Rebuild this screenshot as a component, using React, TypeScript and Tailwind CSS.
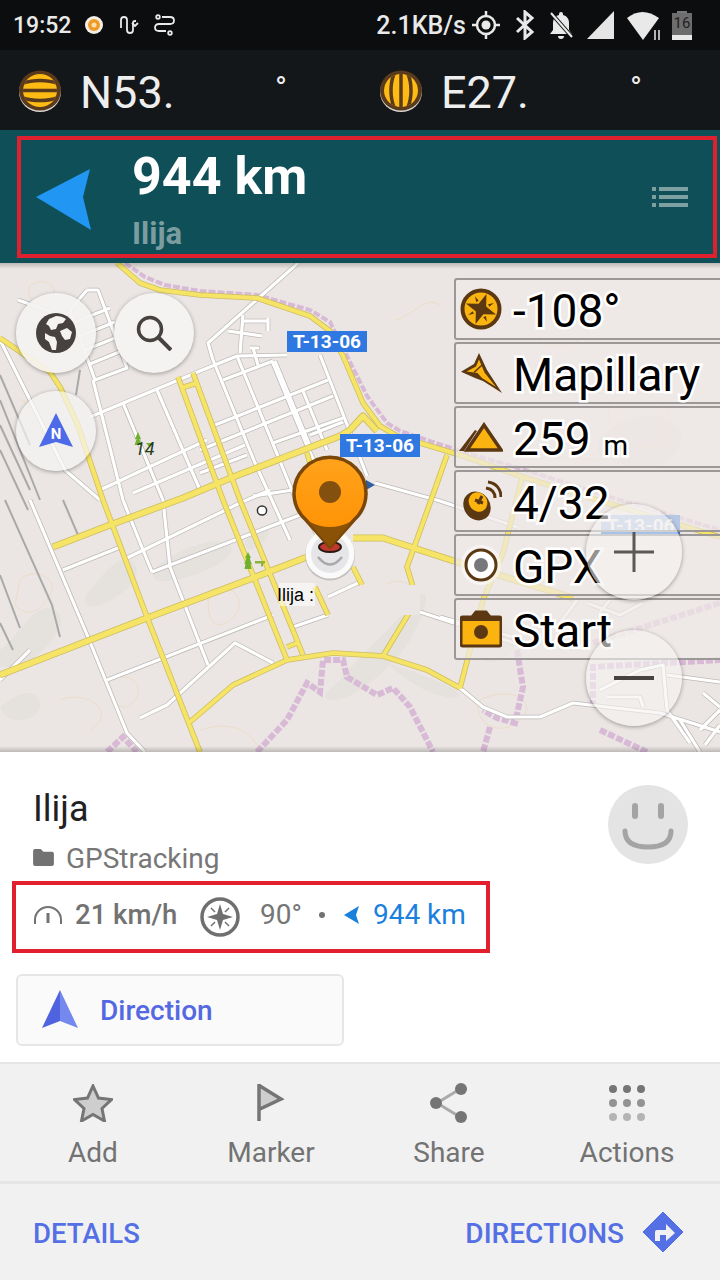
import React from "react";

type P = number[];
const pts = (a: P) => a.join(" ");

const yellowRoads: P[] = [
  [117,263,140,283,160,290,200,295,257,298,310,316,330,331,343,356,363,403,380,426,397,436,460,455,523,477,607,503,720,537],
  [0,338,50,372,60,387,77,423,103,500,147,617,200,752],
  [0,675,90,640,147,618,253,578,307,557],
  [353,538,383,538,460,563,573,598],
  [53,547,110,525,183,498,233,477,340,436,350,430,363,416,377,431],
  [178,377,223,500,287,660],
  [193,373,240,500,303,655],
  [181,388,197,383],
  [287,647,297,643],
  [190,722,233,685,287,660,333,653,383,656,427,670,460,688],
  [383,656,417,600,407,567,430,503,447,455],
  [522,478,503,553,483,600,460,688],
  [353,567,362,585],
  [315,587,328,615],
  [307,453,310,463],
];

const whiteRoads: P[] = [
  [298,263,208,343,213,360,255,463,290,540],
  [237,356,293,493,320,540],
  [272,361,307,446,333,500],
  [275,361,310,446],
  [320,355,367,476],
  [303,391,327,450],
  [93,380,123,500,143,550,152,572],
  [123,403,163,500,170,567,208,665],
  [157,390,200,490],
  [90,417,200,371,237,356,287,355],
  [223,380,273,361],
  [215,425,328,380],
  [200,450,333,396],
  [273,443,343,418],
  [310,435,343,422],
  [200,473,247,455],
  [253,496,293,490],
  [100,490,207,440],
  [133,493,245,445],
  [63,570,118,548],
  [127,558,240,503,270,490],
  [152,572,300,515],
  [107,680,273,615],
  [293,627,328,615],
  [328,597,358,583],
  [140,718,167,705,235,643,273,663],
  [30,500,88,637,127,733,145,752],
  [420,612,460,625,520,645],
  [375,483,440,501,517,527],
  [440,617,513,637],
  [0,340,40,420,65,470,100,500],
  [18,300,60,315],
  [87,290,98,290,127,368,95,380,70,310,87,290],
  [75,322,110,308],
  [80,336,115,322],
  [85,350,120,336],
  [90,364,124,350],
  [243,321,267,321],
  [268,318,268,331],
  [228,331,262,336],
  [243,315,240,353],
  [250,348,258,348,253,348,258,365],
  [460,688,483,707,507,717,540,717,573,703,607,707,660,713,720,732],
  [667,675,720,682],
  [600,690,640,670,663,665,667,710],
  [607,697,640,697,643,707],
  [667,710,690,743],
  [680,720,700,752],
  [703,693,720,707],
  [700,730,720,710],
  [705,745,720,725],
  [577,600,557,627],
  [587,603,620,615,643,603],
  [600,612,610,600],
  [0,680,30,650],
];

const purple: [P, number][] = [
  [[125,263,145,277,165,285,200,291,257,295,310,310,330,322,347,356,367,396,387,423,400,431,460,451,525,470,610,497,720,530], 4],
  [[107,752,123,737,137,752], 6],
  [[257,752,287,720,307,683,320,692,323,660,343,660,347,677,377,695,393,688,410,707,433,752], 6],
  [[517,650,523,687,515,723,497,718,483,710], 6],
  [[490,727,483,752], 6],
  [[593,643,720,603], 6],
  [[593,707,593,667,720,660], 6],
  [[600,730,647,752], 6],
];

const grayRail: P[] = [
  [5,500,52,605,60,637],
  [0,575,20,628],
  [0,623,13,650],
  [63,500,78,535],
  [0,400,40,500],
  [0,375,30,445],
  [0,425,30,490],
  [0,450,28,510],
  [80,370,76,395],
];

const contours: string[] = [
  "M30 285c20-10 30 5 20 15s-25 0-20-15z",
  "M20 580c15-15 40 0 30 15s-20 25-35 10z",
  "M110 680c20-10 35 5 25 20s-30 5-25-20z",
  "M210 590c25-10 40 15 20 30s-25-10-20-30z",
  "M480 700c30-15 60 0 40 20s-50 0-40-20z",
  "M540 300c30-10 70 20 40 40s-70-10-40-40z",
  "M610 400c20-20 70 0 60 30s-70 20-60-30z",
  "M385 585c15-10 35 0 25 20s-35 5-25-20z",
  "M60 700c25-10 60 10 30 30",
  "M500 460c30-20 80 10 120-5",
  "M200 730c30-10 50 0 60 20",
  "M20 400c15 5 20 25 5 30",
  "M395 320c20-5 30-25 45-15",
];

const shades: string[] = [
  "M165 560c25-15 55-25 65-15s-25 30-55 35-25-10-10-20z",
  "M340 680c20-25 50-50 75-80 20-20 10 15-5 40s-55 60-75 60-5-10 5-20z",
  "M395 665c10 5 45 15 60 25s-10 10-30 0-45-30-30-25z",
  "M0 650c25-20 35-50 55-40s-15 50-35 55-30 0-20-15z",
  "M10 700c15-10 30-10 30 5s-25 20-35 10 0-10 5-15z",
  "M610 430c30-25 80-15 70 15s-50 25-70 15-15-15 0-30z",
  "M470 620c40-10 60 30 30 40s-50-30-30-40z",
  "M245 540c20-20 30-10 20 0s-20 15-20 0z",
  "M90 590c20-25 35-40 45-25s-20 35-35 40-20-5-10-15z",
];

const HaloBase = "[font-family:Roboto,sans-serif] leading-none text-black [-webkit-text-stroke:5px_#ffffff] [paint-order:stroke_fill]";
const Halo = `${HaloBase} text-[46px]`;

function MapBackground() {
  return (
    <svg viewBox="0 263 720 489" className="absolute inset-0 h-full w-full">
      <rect x="0" y="263" width="720" height="489" fill="#ebe6e3" />
      {shades.map((d, i) => <path key={i} d={d} fill="#dcdbd8" opacity="0.4" />)}
      {contours.map((d, i) => <path key={i} d={d} fill="none" stroke="#eedcc8" strokeWidth="1" />)}
      {grayRail.map((p, i) => <polyline key={i} points={pts(p)} fill="none" stroke="#a9a9a9" strokeWidth="2" />)}
      {purple.map(([p, w], i) => (
        <polyline key={i} points={pts(p)} fill="none" stroke="#d8b9d6" strokeWidth={w} strokeDasharray="7 2" />
      ))}
      {whiteRoads.map((p, i) => <polyline key={i} points={pts(p)} fill="none" stroke="#bdb9b6" strokeWidth="4.6" strokeLinejoin="round" />)}
      {whiteRoads.map((p, i) => <polyline key={i} points={pts(p)} fill="none" stroke="#ffffff" strokeWidth="3.2" strokeLinejoin="round" />)}
      {yellowRoads.map((p, i) => <polyline key={i} points={pts(p)} fill="none" stroke="#cdbd62" strokeWidth={i === 2 || i === 3 || i === 4 ? 7 : 5.6} strokeLinejoin="round" />)}
      {yellowRoads.map((p, i) => <polyline key={i} points={pts(p)} fill="none" stroke="#f6e467" strokeWidth={i === 2 || i === 3 || i === 4 ? 5.4 : 4} strokeLinejoin="round" />)}
      <path d="M138 432l3 7h-1.6l2 6h-6.8l2-6H135z" fill="#6fb02c" />
      <path d="M146 443l7 0-3.5 4z" fill="#6fb02c" />
      <path d="M248 552l3 6h-1.4l2 6h-1.1l1 5h-7l1-5h-1.1l2-6h-1.4z" fill="#6fb02c" />
      <path d="M255 561h10v2.4h-2v3h-2v-3h-6z" fill="#8db33a" />
      <circle cx="262" cy="510.500" r="4.600" fill="#fff" stroke="#333" strokeWidth="1.500" />
      <path d="M366 480l9 5-9 5z" fill="#2e5f9e" />
      <rect x="279" y="583" width="36" height="23" fill="#ffffff" opacity="0.55" />
      <rect x="360" y="585" width="60" height="30" fill="#ebe6e3" />
    </svg>
  );
}

function RoundButton({ className, children }: { className: string; children: React.ReactNode }) {
  return (
    <div className={`absolute flex items-center justify-center rounded-full shadow-[0_1px_4px_rgba(0,0,0,0.35)] ${className}`}>
      {children}
    </div>
  );
}

function RoadLabel({ className, children }: { className: string; children: string }) {
  return (
    <div className={`absolute flex items-center justify-center bg-[#2f78e2] [font-family:Roboto,sans-serif] text-[19px] font-bold leading-none text-white ${className}`}>
      {children}
    </div>
  );
}

function Widget({ icon, children }: { icon: React.ReactNode; children: React.ReactNode }) {
  return (
    <div className="flex h-[62px] items-center rounded-l-[3px] border-2 border-r-0 border-[#9b9897] bg-[#efeae7]/70">
      <div className="flex w-[50px] shrink-0 items-center justify-center">{icon}</div>
      <div className="ml-[8px] mt-[4px] flex items-baseline">{children}</div>
    </div>
  );
}

const BR = "#5b3812";
const YL = "#fbb40f";

function CompassWidgetIcon() {
  return (
    <svg viewBox="0 0 42 42" className="h-[42px] w-[42px]">
      <circle cx="21" cy="21" r="18.500" fill={YL} stroke={BR} strokeWidth="4" />
      <g transform="rotate(20 21 21)">
        <path d="M21 5l4 12 12 4-12 4-4 12-4-12-12-4 12-4z" fill={BR} />
        <path d="M11 11l5 3-2 2zM31 11l-5 3 2 2zM11 31l5-3-2-2zM31 31l-5-3 2-2z" fill={BR} />
      </g>
    </svg>
  );
}

function MapillaryIcon() {
  return (
    <svg viewBox="0 0 42 40" className="h-[40px] w-[42px]">
      <path d="M19 0L27 17 42 40 23 28 15 25 1 18.700 14 11z" fill={BR} />
      <path d="M19 6.500L24.500 19.500 36 34 22 25 17.500 20 6.500 18.500 16 13.500z" fill={YL} />
      <path d="M14 19.500L22 12" stroke={BR} strokeWidth="1.500" />
    </svg>
  );
}

function AltitudeIcon() {
  return (
    <svg viewBox="0 0 44 30" className="h-[30px] w-[44px]">
      <path d="M8 28h34L25 3z" fill={YL} stroke={BR} strokeWidth="3.500" strokeLinejoin="miter" />
      <path d="M0 29L16 8l2 1L5 29z" fill={BR} />
    </svg>
  );
}

function SatelliteIcon() {
  return (
    <svg viewBox="0 0 42 42" className="h-[42px] w-[42px]">
      <ellipse cx="17" cy="26" rx="13" ry="15" transform="rotate(-35 17 26)" fill={BR} />
      <ellipse cx="18" cy="22" rx="9" ry="10" transform="rotate(-35 18 22)" fill={YL} />
      <path d="M18 24l4-8M15 20l8 3" stroke={BR} strokeWidth="3" />
      <path d="M26 8c6 1 9 5 9 10M28 2c8 1 13 7 13 15" fill="none" stroke={BR} strokeWidth="3" />
    </svg>
  );
}

function GpxIcon() {
  return (
    <svg viewBox="0 0 42 42" className="h-[42px] w-[42px]">
      <circle cx="21" cy="21" r="20" fill="#ffffff" opacity="0.5" />
      <circle cx="21" cy="21" r="15" fill="#fff" stroke={BR} strokeWidth="3" />
      <circle cx="21" cy="21" r="7" fill="#77787b" />
    </svg>
  );
}

function CameraIcon() {
  return (
    <svg viewBox="0 0 42 38" className="h-[38px] w-[42px]">
      <path d="M3 7h9l4-5h10l4 5h9q2 0 2 2v25q0 2-2 2H3q-2 0-2-2V9q0-2 2-2z" fill={YL} stroke={BR} strokeWidth="3" />
      <path d="M3 7h9l4-5h10l4 5h9q2 0 2 2v2H1V9q0-2 2-2z" fill={BR} />
      <circle cx="21" cy="22" r="7" fill={BR} />
    </svg>
  );
}

function Marker() {
  return (
    <div className="absolute left-[290px] top-[192px] h-[128px] w-[80px]">
      <svg viewBox="0 0 80 128" className="h-full w-full">
        <defs>
          <linearGradient id="pin" x1="0" y1="0" x2="0" y2="1">
            <stop offset="0" stopColor="#ffa31c" />
            <stop offset="1" stopColor="#ff8f00" />
          </linearGradient>
        </defs>
        <circle cx="40" cy="100.500" r="25" fill="#9c9c9c" opacity="0.5" />
        <circle cx="40" cy="99" r="24.500" fill="#fafafa" />
        <circle cx="40" cy="99" r="19" fill="#e6e6e8" />
        <ellipse cx="40" cy="92" rx="11" ry="5" fill="#c0382f" stroke="#2b1a14" strokeWidth="2" />
        <path d="M28 102q12 15 24 0" fill="none" stroke="#a9a9ab" strokeWidth="2.500" />
        <path d="M40 92 L16 65 A36 36 0 1 1 64 65 Z" fill="url(#pin)" />
        <path d="M16 65 A36 36 0 1 1 64 65 L40 92 Z" fill="none" stroke="#7a4708" strokeWidth="3.500" strokeLinejoin="round" />
        <path d="M40 92 L18 66 Q40 78 62 66 Z" fill="#8a5206" />
        <circle cx="40" cy="37" r="11" fill="#84500f" />
      </svg>
    </div>
  );
}

function StatusBar() {
  return (
    <div className="flex h-[50px] items-center bg-[#0c0d0e] pl-[13px] text-[#e9e9e9] [font-family:Roboto,sans-serif]">
      <span className="text-[23px] font-medium leading-none">19:52</span>
      <svg viewBox="0 0 20 20" className="ml-[13px] h-[20px] w-[20px]">
        <circle cx="10" cy="10" r="9" fill="#f4efe6" />
        <circle cx="10" cy="10" r="6" fill="#f09a25" />
        <circle cx="10" cy="10" r="2.500" fill="#f8e1b0" />
      </svg>
      <svg viewBox="0 0 20 22" className="ml-[15px] h-[22px] w-[20px]" fill="none" stroke="#e9e9e9" strokeWidth="1.800">
        <path d="M2 14V6q0-3 3-3t3 3v10q0 3 3 3t3-3V9q0-2 2-2h1" />
        <path d="M13 9l3 3 3-3" />
      </svg>
      <svg viewBox="0 0 22 22" className="ml-[15px] h-[22px] w-[22px]" fill="none" stroke="#e9e9e9" strokeWidth="1.800">
        <circle cx="4" cy="3" r="1.800" />
        <circle cx="16" cy="19" r="1.800" />
        <path d="M8 3h8q4 0 4 3.500T16 10H5q-4 0-4 3.500T5 17h7" />
      </svg>
      <span className="ml-[200px] whitespace-nowrap text-[25px] font-medium leading-none">2.1KB/s</span>
      <svg viewBox="0 0 28 28" className="ml-[6px] h-[28px] w-[28px] shrink-0" fill="none" stroke="#e9e9e9" strokeWidth="2.500">
        <circle cx="14" cy="14" r="9" />
        <circle cx="14" cy="14" r="4.500" fill="#e9e9e9" stroke="none" />
        <path d="M14 0v5M14 23v5M0 14h5M23 14h5" />
      </svg>
      <svg viewBox="0 0 20 30" className="ml-[15px] h-[30px] w-[20px] shrink-0" fill="none" stroke="#e9e9e9" strokeWidth="3">
        <path d="M2 8l15 14-7 6V2l7 6L2 22" />
      </svg>
      <svg viewBox="0 0 26 30" className="ml-[13px] h-[30px] w-[26px] shrink-0" fill="#e9e9e9">
        <path d="M13 2a2 2 0 0 1 2 2v1c4 1 6 4 6 8v7l3 4H2l3-4v-7c0-4 2-7 6-8V4a2 2 0 0 1 2-2zM10 26h6a3 3 0 0 1-6 0z" />
        <path d="M3 3l21 24" stroke="#0c0d0e" strokeWidth="4" />
        <path d="M3 3l21 24" stroke="#e9e9e9" strokeWidth="2" />
      </svg>
      <svg viewBox="0 0 28 28" className="ml-[13px] h-[28px] w-[28px] shrink-0"><path d="M27 0v28H0z" fill="#e5e5e5" /></svg>
      <svg viewBox="0 0 36 30" className="ml-[12px] h-[30px] w-[36px] shrink-0">
        <path d="M0 8Q15-4 32 8L16 30z" fill="#e9e9e9" />
        <path d="M26 20h10v10H26z" fill="#0c0d0e" />
        <path d="M28 20v10M32 20v10" stroke="#e9e9e9" strokeWidth="1.500" />
      </svg>
      <div className="ml-[9px] flex h-[29px] w-[20px] shrink-0 flex-col">
        <div className="mx-auto h-[2px] w-[10px] bg-[#777]" />
        <div className="flex h-[22px] items-center justify-center bg-[#6d6d6d] text-[15px] leading-none text-[#222]">16</div>
        <div className="h-[5px] bg-[#e9e9e9]" />
      </div>
    </div>
  );
}

function Globe({ vertical }: { vertical?: boolean }) {
  const id = vertical ? "gv" : "gh";
  return (
    <svg viewBox="0 0 42 42" className="h-[42px] w-[42px]">
      <ellipse cx="21" cy="22" rx="21" ry="20" fill="#d9d4d0" />
      <ellipse cx="21" cy="20.500" rx="21" ry="20" fill="#5a3a1c" />
      <clipPath id={id}>
        <ellipse cx="21" cy="20.500" rx="17" ry="16.500" />
      </clipPath>
      <g clipPath={`url(#${id})`}>
        <rect width="42" height="42" fill="#fdbb14" />
        {vertical ? (
          <g fill="none" stroke="#5a3a1c" strokeWidth="3.500">
            <path d="M21 0v42" />
            <ellipse cx="21" cy="20.500" rx="10" ry="23" />
          </g>
        ) : (
          <g fill="none" stroke="#5a3a1c" strokeWidth="3.500">
            <path d="M0 20.500h42" />
            <ellipse cx="21" cy="20.500" rx="25" ry="10" />
          </g>
        )}
      </g>
    </svg>
  );
}

function CoordBar() {
  return (
    <div className="flex h-[80px] items-center bg-[#14171a] text-[#eeeeee] [font-family:Roboto,sans-serif]">
      <div className="ml-[19px] mt-[1px] shrink-0"><Globe /></div>
      <span className="ml-[19px] mt-[4px] w-[195px] text-[45px] leading-none">N53.</span>
      <span className="-mt-[5px] text-[32px] leading-none">°</span>
      <div className="ml-[93px] mt-[1px] shrink-0"><Globe vertical /></div>
      <span className="ml-[19px] mt-[4px] w-[189px] text-[45px] leading-none">E27.</span>
      <span className="-mt-[5px] text-[32px] leading-none">°</span>
    </div>
  );
}

function NavBar() {
  return (
    <div className="flex h-[133px] items-center bg-[#0f4f57] pl-[17px] [font-family:Roboto,sans-serif]">
      <div className="flex h-[122px] w-[700px] items-center border-[4px] border-[#e0202e]">
        <svg viewBox="0 0 56 66" className="ml-[15px] h-[66px] w-[56px] shrink-0">
          <path d="M0 33L54 5 47 33 55 66z" fill="#2196f3" />
        </svg>
        <div className="ml-[40px] flex h-full flex-col">
          <span className="mt-[9px] text-[52px] font-bold leading-[56px] text-white">944 km</span>
          <span className="mt-[9px] text-[31px] font-bold leading-[40px] text-[#7b9da0]">Ilija</span>
        </div>
        <svg viewBox="0 0 36 20" className="ml-auto mr-[25px] h-[20px] w-[36px]" fill="#7fa0a3">
          <rect x="0" y="0" width="4" height="4" /><rect x="7" y="0" width="29" height="4" />
          <rect x="0" y="8" width="4" height="4" /><rect x="7" y="8" width="29" height="4" />
          <rect x="0" y="16" width="4" height="4" /><rect x="7" y="16" width="29" height="4" />
        </svg>
      </div>
    </div>
  );
}

function MapArea() {
  return (
    <div className="relative h-[489px] overflow-hidden bg-[#ebe6e3]">
      <MapBackground />
      <div className="absolute inset-x-0 top-0 h-[6px] bg-gradient-to-b from-black/20 to-transparent" />
      <div className="absolute inset-x-0 bottom-0 h-[6px] bg-gradient-to-t from-black/20 to-transparent" />

      <RoadLabel className="left-[287px] top-[68px] h-[21px] w-[80px]">T-13-06</RoadLabel>
      <RoadLabel className="left-[340px] top-[171px] h-[23px] w-[80px]">T-13-06</RoadLabel>
      <RoadLabel className="left-[601px] top-[252px] h-[21px] w-[79px]">T-13-06</RoadLabel>

      <span className="absolute left-[135px] top-[177px] text-[18px] italic leading-none text-[#1f3d16] [font-family:Roboto,sans-serif]">14</span>
      <span className="absolute left-[277px] top-[323px] text-[18px] leading-none text-black [font-family:'Liberation_Sans',sans-serif]">Ilija :</span>

      <Marker />

      <RoundButton className="left-[16px] top-[30px] h-[80px] w-[80px] bg-[#f5f3f2]/90">
        <svg viewBox="0 0 40 40" className="h-[40px] w-[40px]">
          <circle cx="20" cy="20" r="20" fill="#47423f" />
          <path d="M20 3c4 0 7 1 10 3l-3 4-5 1-2 5-5 1-2-4-3-2 3-5zM24 18l7-3 5 4-2 7-5 1-3-4zM9 20l5 3 5 1 2 5-1 8-4 0-3-8-4-3z" fill="#f5f3f2" />
        </svg>
      </RoundButton>
      <RoundButton className="left-[114px] top-[30px] h-[80px] w-[80px] bg-[#f5f3f2]">
        <svg viewBox="0 0 36 36" className="h-[36px] w-[36px]" fill="none" stroke="#47423f" strokeWidth="3.500">
          <circle cx="14" cy="14" r="11.500" />
          <path d="M22 22l13 13" strokeWidth="4" />
        </svg>
      </RoundButton>
      <RoundButton className="left-[16px] top-[128px] h-[80px] w-[80px] bg-[#f5f3f2]/70">
        <svg viewBox="0 0 34 36" className="h-[36px] w-[34px]">
          <path d="M17 0l17 34-17-5-17 5z" fill="#4d6ae8" />
          <text x="17" y="26" textAnchor="middle" fontSize="15" fontWeight="700" fill="#fff" fontFamily="Roboto, sans-serif">N</text>
        </svg>
      </RoundButton>

      <div className="absolute right-0 top-[15px] flex w-[266px] flex-col gap-[2px]">
        <Widget icon={<CompassWidgetIcon />}><span className={`${Halo} -ml-[1px]`}>-108°</span></Widget>
        <Widget icon={<MapillaryIcon />}><span className={`${Halo} -ml-[1px]`}>Mapillary</span></Widget>
        <Widget icon={<AltitudeIcon />}><span className={`${Halo} -ml-[1px]`}>259</span><span className={`${HaloBase} ml-[13px] text-[28px]`}>m</span></Widget>
        <Widget icon={<SatelliteIcon />}><span className={`${Halo} -ml-[1px]`}>4/32</span></Widget>
        <Widget icon={<GpxIcon />}><span className={`${Halo} -ml-[1px]`}>GPX</span></Widget>
        <Widget icon={<CameraIcon />}><span className={`${Halo} -ml-[1px]`}>Start</span></Widget>
      </div>

      <RoundButton className="left-[586px] top-[241px] h-[96px] w-[96px] bg-[#f5f3f2]/60">
        <svg viewBox="0 0 40 40" className="h-[40px] w-[40px]"><path d="M20 0v40M0 20h40" stroke="#5c5856" strokeWidth="3" /></svg>
      </RoundButton>
      <RoundButton className="left-[586px] top-[367px] h-[96px] w-[96px] bg-[#f5f3f2]/60">
        <svg viewBox="0 0 40 4" className="h-[4px] w-[40px]"><path d="M0 2h40" stroke="#474341" strokeWidth="4" /></svg>
      </RoundButton>
    </div>
  );
}

function Sheet() {
  return (
    <div className="flex h-[310px] flex-col bg-white [font-family:Roboto,sans-serif]">
      <div className="relative flex flex-1 flex-col">
        <div className="ml-[33px] mt-[34px] text-[36px] leading-[46px] text-[#212121]">Ilija</div>
        <div className="ml-[33px] mt-[8px] flex items-center">
          <svg viewBox="0 0 22 18" className="-mt-[3px] h-[17px] w-[21px]" fill="#727272">
            <path d="M0 2q0-2 2-2h6l3 3h9q2 0 2 2v11q0 2-2 2H2q-2 0-2-2z" />
          </svg>
          <span className="ml-[12px] text-[28px] leading-[38px] text-[#777777]">GPStracking</span>
        </div>
        <div className="ml-[12px] mt-[3px] flex h-[72px] w-[478px] items-center border-[4px] border-[#e21f2c] pl-[17px]">
          <svg viewBox="0 0 30 20" className="-mt-[4px] h-[20px] w-[30px] shrink-0" fill="none" stroke="#727272" strokeWidth="2">
            <path d="M2 19v-4a13 13 0 0 1 26 0v4" />
            <path d="M15 8v10" strokeWidth="3" />
          </svg>
          <span className="-mt-[4px] ml-[12px] w-[104px] whitespace-nowrap text-[27.5px] font-medium leading-none text-[#727272]">21 km/h</span>
          <svg viewBox="0 0 40 40" className="ml-[21px] h-[40px] w-[40px] shrink-0" fill="none">
            <circle cx="20" cy="20" r="18" stroke="#6f6f6f" strokeWidth="3.500" />
            <path d="M20 7l3 10 10 3-10 3-3 10-3-10-10-3 10-3z" fill="#6f6f6f" />
            <path d="M11 11l4 4M29 11l-4 4M11 29l4-4M29 29l-4-4" stroke="#6f6f6f" strokeWidth="1.500" />
          </svg>
          <span className="-mt-[4px] ml-[20px] whitespace-nowrap text-[28px] leading-none text-[#757575]">90°</span>
          <span className="-mt-[4px] ml-[17px] h-[6px] w-[6px] rounded-full bg-[#727272]" />
          <svg viewBox="0 0 16 18" className="-mt-[4px] ml-[19px] h-[18px] w-[16px] shrink-0"><path d="M0 9L15 0l-3 9 3 9z" fill="#1a80dc" /></svg>
          <span className="-mt-[4px] ml-[13px] whitespace-nowrap text-[28px] leading-none text-[#1a80dc]">944 km</span>
        </div>
        <div className="ml-[16px] mt-[21px] flex h-[72px] w-[328px] items-center rounded-[6px] border-2 border-[#e6e6e6] bg-[#fafafa] pl-[24px]">
          <svg viewBox="0 0 36 40" className="h-[40px] w-[36px]">
            <path d="M18 0L0 38l18-7z" fill="#4f63e0" />
            <path d="M18 0l18 38-18-7z" fill="#7488ee" />
          </svg>
          <span className="ml-[22px] mt-[2px] text-[28px] font-medium leading-none text-[#5468e2]">Direction</span>
        </div>
        <div className="absolute left-[608px] top-[33px] flex h-[79px] w-[80px] items-center justify-center rounded-full bg-[#e4e4e4]">
          <svg viewBox="0 0 52 50" className="h-[50px] w-[52px]" fill="none" stroke="#a4a4a4">
            <path d="M13 6v10M39 6v10" strokeWidth="6" strokeLinecap="round" />
            <path d="M3 31q0 16 23 16t23-16" strokeWidth="5" strokeLinecap="round" />
          </svg>
        </div>
      </div>
    </div>
  );
}

function ActionItem({ icon, label }: { icon: React.ReactNode; label: string }) {
  return (
    <div className="flex w-[178px] flex-col items-center">
      <div className="flex h-[42px] items-center justify-center">{icon}</div>
      <span className="mt-[12px] text-[28px] leading-[34px] text-[#737373]">{label}</span>
    </div>
  );
}

function ActionBar() {
  const G1 = "#757575";
  return (
    <div className="flex flex-col bg-[#f1f1f1] [font-family:Roboto,sans-serif]">
      <div className="flex h-[122px] border-b-[3px] border-t-[2px] border-[#e5e5e5] px-[4px] pt-[18px]">
        <ActionItem label="Add" icon={
          <svg viewBox="0 0 40 38" className="h-[38px] w-[40px]">
            <path d="M20 2l5.500 12 13 1.500-9.500 9 2.500 12.500L20 30.500 8.500 37 11 24.500l-9.500-9 13-1.500z" fill="#cecece" stroke={G1} strokeWidth="3" />
          </svg>} />
        <ActionItem label="Marker" icon={
          <svg viewBox="0 0 28 38" className="h-[38px] w-[28px]">
            <path d="M3 2l24 13L3 26z" fill="#cecece" />
            <path d="M2 0v37M3 2l21 13L3 25" fill="none" stroke={G1} strokeWidth="3.500" />
          </svg>} />
        <ActionItem label="Share" icon={
          <svg viewBox="0 0 38 40" className="h-[40px] w-[38px]">
            <path d="M7 20L30 6M7 20l23 14" stroke="#aaaaaa" strokeWidth="3" />
            <circle cx="6" cy="20" r="6" fill={G1} /><circle cx="31" cy="6" r="6" fill={G1} /><circle cx="31" cy="34" r="6" fill={G1} />
          </svg>} />
        <ActionItem label="Actions" icon={
          <svg viewBox="0 0 36 36" className="h-[36px] w-[36px]">
            {[4, 18, 32].map((y, r) => [4, 18, 32].map((x) => (
              <circle key={`${x}-${y}`} cx={x} cy={y} r="4" fill={["#757575", "#939393", "#b4b4b4"][r]} />
            )))}
          </svg>} />
      </div>
      <div className="flex h-[96px] items-center justify-between pl-[33px] pr-[36px] pt-[4px]">
        <span className="text-[27.5px] font-medium leading-none text-[#5470e4]">DETAILS</span>
        <div className="flex items-center">
          <span className="text-[28px] font-medium leading-none text-[#5470e4]">DIRECTIONS</span>
          <svg viewBox="0 0 42 42" className="-mt-[4px] ml-[18px] h-[42px] w-[42px]">
            <path d="M21 1l20 20-20 20L1 21z" fill="#5470e4" stroke="#5470e4" strokeLinejoin="round" />
            <path d="M13 30v-9q0-2 2-2h9v-6l9 9-9 8v-6h-6v6z" fill="#f1f1f1" />
          </svg>
        </div>
      </div>
    </div>
  );
}

export default function App() {
  return (
    <div className="flex h-[1280px] w-[720px] flex-col overflow-hidden bg-white">
      <StatusBar />
      <CoordBar />
      <NavBar />
      <MapArea />
      <Sheet />
      <ActionBar />
    </div>
  );
}
